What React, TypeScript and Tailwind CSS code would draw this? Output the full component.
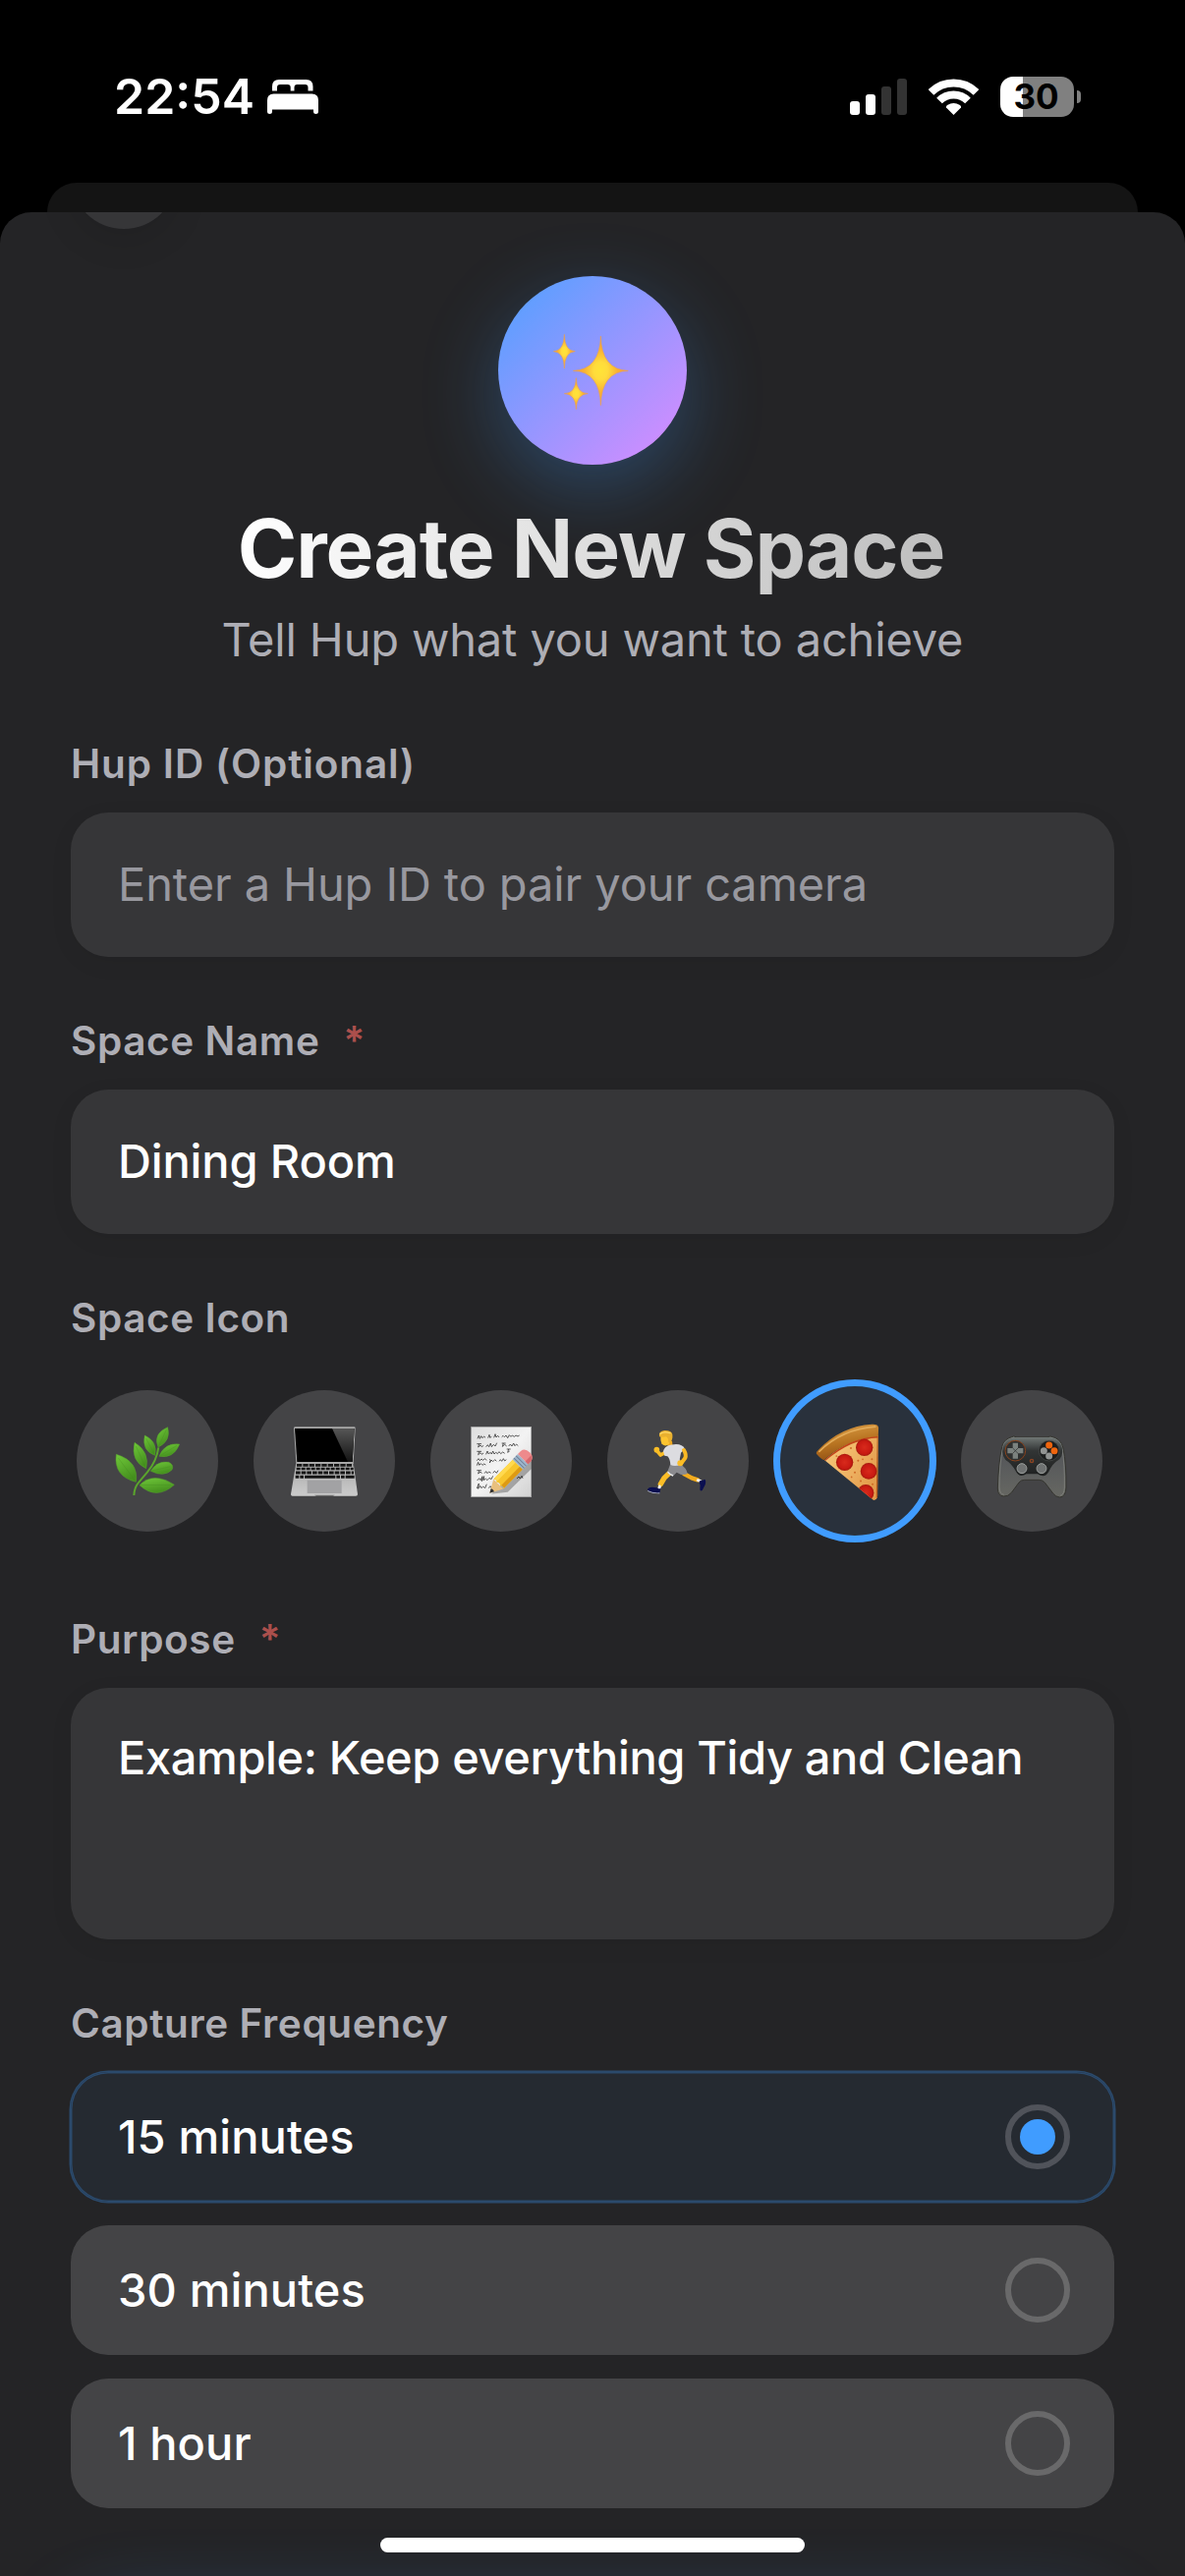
import React from "react";

function Star({ cx, cy, rx, ry }: { cx: number; cy: number; rx: number; ry: number }) {
  const k = 0.03;
  const d = `M${cx} ${cy - ry} Q${cx + rx * k} ${cy - ry * k} ${cx + rx} ${cy} Q${cx + rx * k} ${cy + ry * k} ${cx} ${cy + ry} Q${cx - rx * k} ${cy + ry * k} ${cx - rx} ${cy} Q${cx - rx * k} ${cy - ry * k} ${cx} ${cy - ry}Z`;
  return <path d={d} fill="url(#spark)" stroke="#f2a03a" strokeWidth="1.500" strokeLinejoin="round" />;
}

function Sparkles() {
  return (
    <svg viewBox="201 123 576 576" className="size-full">
      <defs>
        <radialGradient id="spark">
          <stop offset="0" stopColor="#ffe337" />
          <stop offset="0.25" stopColor="#ffdc3c" />
          <stop offset="0.6" stopColor="#f9b233" />
          <stop offset="1" stopColor="#ee9a48" />
        </radialGradient>
      </defs>
      <Star cx={514} cy={412} rx={84} ry={106} />
      <Star cx={403} cy={353} rx={33} ry={52} />
      <Star cx={439} cy={482} rx={36} ry={48} />
    </svg>
  );
}

function Herb() {
  const leaves = [
    ["M303 249 Q286 208 332 188 Q343 230 303 249Z", "M303 249 L328 196"],
    ["M306 277 Q322 235 368 240 Q350 285 306 277Z", "M306 277 L360 244"],
    ["M293 274 Q252 260 262 213 Q302 232 293 274Z", "M293 274 L266 222"],
    ["M266 314 Q218 292 231 235 Q278 264 266 314Z", "M266 314 L235 246"],
    ["M235 355 Q166 338 175 271 Q244 292 235 355Z", "M235 355 L181 282"],
    ["M280 322 Q300 290 335 295 Q352 303 345 318 Q320 342 280 322Z", "M280 322 L340 308"],
    ["M246 365 Q288 322 352 364 Q298 412 246 365Z", "M246 365 L342 364"],
  ];
  return (
    <svg viewBox="54 75 432 432" className="size-full">
      <defs>
        <linearGradient id="leaf" x1="0" y1="0" x2="0.4" y2="1">
          <stop offset="0" stopColor="#70c93a" />
          <stop offset="1" stopColor="#45901e" />
        </linearGradient>
      </defs>
      <path d="M229 396 Q230 372 244 356 L270 325 Q298 292 304 250" fill="none" stroke="#5aa52c" strokeWidth="6" />
      {leaves.map(([leaf, vein]) => (
        <g key={leaf}>
          <path d={leaf} fill="url(#leaf)" stroke="#56a82a" strokeWidth="1.500" />
          <path d={vein} stroke="#3f8420" strokeWidth="2" opacity="0.4" />
        </g>
      ))}
    </svg>
  );
}

function Laptop() {
  return (
    <svg viewBox="594 75 432 432" className="size-full">
      <defs>
        <linearGradient id="glare" x1="0" y1="0" x2="0" y2="1">
          <stop offset="0" stopColor="#565656" />
          <stop offset="1" stopColor="#141414" />
        </linearGradient>
        <linearGradient id="deck" x1="0" y1="0" x2="0" y2="1">
          <stop offset="0" stopColor="#a9a9a9" />
          <stop offset="1" stopColor="#cccccc" />
        </linearGradient>
      </defs>
      <path d="M717 191 Q717 187 722 187 H901 Q905 187 905 191 L899 297 H724Z" fill="#a8a8a8" />
      <path d="M720 192 H902 L896 294 H727Z" fill="#000" />
      <path d="M834 192 H902 L896 294 H882Z" fill="url(#glare)" />
      <path d="M724 297 H899 L912 393 Q912 398 906 398 H713 Q708 398 708 393Z" fill="url(#deck)" />
      <path d="M726 304 H898" stroke="#151515" strokeWidth="8" strokeDasharray="16 3" />
      <path d="M725 315 H899" stroke="#151515" strokeWidth="8" strokeDasharray="12 3" />
      <path d="M723 327 H900" stroke="#151515" strokeWidth="9" strokeDasharray="14 3" />
      <path d="M722 340 H902" stroke="#151515" strokeWidth="9" strokeDasharray="11 3 11 3 94 3" />
      <rect x="758" y="350" width="105" height="40" fill="#a2a2a4" />
      <path d="M780 395 H842 L836 399 H786Z" fill="#6b6b6b" />
    </svg>
  );
}

function Memo() {
  const lines = [
    "M198 223 l4 -10 l3 10 l4 -8 l4 6 l5 -5 l4 4 m8 1 l4 -10 l2 9 l5 -3 m7 3 l4 -11 l3 10 l5 -5 l4 5 m8 -1 l4 -4 l4 4 l5 -5 l5 8 l5 -9 l5 5 l4 -4 l6 4 l5 -4 l6 3 l5 -3",
    "M196 239 h14 m-7 0 l-3 10 l7 -6 l4 5 l5 -4 m8 4 l5 -6 l4 6 l5 -11 l3 11 l6 -7 l5 5 l5 -10 m15 1 h12 m-7 0 l-3 10 l7 -6 l6 5 m6 0 l5 -6 l5 6 l5 -9 l4 8 l5 -5 l5 5",
    "M196 262 h14 m-7 0 l-3 10 l7 -6 l4 5 l5 -4 m8 4 l4 -10 l4 9 l5 -5 l4 5 l4 -9 l4 9 l5 -5 l5 4 l5 -6 l5 6 l6 -5 l6 4 m6 -13 h12 m-6 0 l-3 10 l6 -4",
    "M196 290 l5 -6 l4 6 l5 -5 l5 4 l5 -5 l6 5 m8 -3 l4 3 l-3 8 l5 -9 l5 5 l6 -6 l5 5 m8 0 l4 -5 l4 5 l5 -8 l4 7 l5 -4",
    "M196 305 l4 -10 l3 9 l5 -5 l5 5 l5 -4 l5 3",
    "M196 320 h14 m-7 0 l-3 10 l7 -6 l4 5 m8 0 l5 -6 l4 6 l5 -5 l6 4 m6 0 l5 -6 l6 6 l5 -8",
    "M197 351 l6 -7 l4 6 l6 -12 l-2 15 l7 -15 l-1 12 l6 -5 l5 5 l6 -7 l6 4 l5 -10 M318 345 l6 -6 l4 6 l5 -8 l3 7",
    "M196 375 l6 -15 l-2 16 l6 -9 l4 7 l5 -5 l6 5 l5 -12 m6 12 l5 -6 l5 7 l5 -14",
  ];
  return (
    <svg viewBox="54 75 432 432" className="size-full">
      <defs>
        <linearGradient id="paper" x1="0" y1="0" x2="1" y2="1">
          <stop offset="0" stopColor="#dedede" />
          <stop offset="0.5" stopColor="#f3f3f3" />
          <stop offset="1" stopColor="#d2d2d2" />
        </linearGradient>
      </defs>
      <rect x="179" y="187" width="183" height="214" fill="url(#paper)" stroke="#a9a9a9" strokeWidth="2" />
      {lines.map((d) => (
        <path key={d} d={d} fill="none" stroke="#3a3a3a" strokeWidth="2.500" strokeLinejoin="round" />
      ))}
      <path d="M240 392 L290 386 L362 316 L362 280Z" fill="#000" opacity="0.28" />
      <g transform="translate(235 389) rotate(-45.5)">
        <path d="M0 0 L38 -21 V21Z" fill="#e9c07e" />
        <path d="M0 0 L13 -7 Q16 0 13 7Z" fill="#333" />
        <path d="M38 -21 Q46 -14 38 -8 Q46 0 38 8 Q46 14 38 21 H122 V-21Z" fill="#f7c52d" />
        <rect x="42" y="-21" width="80" height="12" fill="#ffd94f" />
        <rect x="42" y="9" width="80" height="12" fill="#dd9a13" />
        <rect x="122" y="-22" width="23" height="44" fill="#9fb6cc" />
        <path d="M128 -22 V22 M137 -22 V22" stroke="#6e8196" strokeWidth="3" />
        <path d="M145 -22 H158 Q174 -20 174 0 Q174 20 158 22 H145Z" fill="#ee8a8c" />
        <path d="M145 10 H170 Q166 21 158 22 H145Z" fill="#d6686d" />
      </g>
    </svg>
  );
}

function Runner() {
  return (
    <svg viewBox="594 75 432 432" className="size-full">
      <g fill="none" strokeLinecap="round" strokeLinejoin="round">
        <path d="M828 330 L852 343 L870 349" stroke="#f2ab1d" strokeWidth="13" />
        <path d="M871 350 L878 352" stroke="#f4f4f4" strokeWidth="9" />
        <path d="M786 326 L768 343 L757 362" stroke="#fbbd26" strokeWidth="16" />
        <path d="M754 369 L753 373" stroke="#f4f4f4" strokeWidth="9" />
        <path d="M745 259 L757 273 L770 266" stroke="#fbbd26" strokeWidth="11" />
      </g>
      <circle cx="745" cy="257" r="8.500" fill="#fbbd26" />
      <path d="M717 377 Q720 371 731 371 L745 373 Q752 378 757 375 L754 390 Q733 391 718 382Z" fill="#0b0f50" />
      <path d="M717 381 Q733 390 754 388 V391 Q733 392 718 384Z" fill="#b9bdd2" />
      <path d="M877 351 Q886 352 891 347 Q897 350 893 364 L884 381 Q876 385 877 376 Q879 363 875 356Z" fill="#0b0f50" />
      <path d="M786 302 L816 300 Q836 312 839 330 Q828 335 818 332 L806 326 L794 338 Q784 334 777 326Z" fill="#8a8a8e" />
      <path d="M777 326 Q784 334 794 338 L796 334 Q786 330 780 323Z" fill="#e8e8e8" />
      <path d="M776 232 L792 230 L794 246 H779Z" fill="#eda51c" />
      <path d="M765 262 Q767 247 786 242 L804 240 Q824 240 831 254 L819 266 Q813 284 817 303 Q800 309 787 303 Q786 285 778 277 L769 275Z" fill="#dcdce0" />
      <path d="M828 258 Q836 272 832 282 L820 298" fill="none" stroke="#f9b823" strokeWidth="12" strokeLinecap="round" strokeLinejoin="round" />
      <circle cx="817" cy="298" r="9" fill="#fbbd26" />
      <path d="M757 214 Q756 230 760 238 Q765 246 775 244 Q790 238 790 218 L778 210Z" fill="#fdc430" />
      <path d="M753 217 Q750 200 768 198 Q790 197 793 210 Q795 226 785 238 L780 232 Q782 222 774 217 Q762 219 753 217Z" fill="#e9b02f" />
      <path d="M756 208 Q768 200 786 206" fill="none" stroke="#ffd968" strokeWidth="4" strokeLinecap="round" />
    </svg>
  );
}

function Pizza() {
  return (
    <svg viewBox="52 43 496 496" className="size-full">
      <defs>
        <linearGradient id="crust" x1="0.3" y1="0" x2="0.6" y2="1">
          <stop offset="0" stopColor="#d99b45" />
          <stop offset="0.5" stopColor="#b87421" />
          <stop offset="1" stopColor="#8d4c12" />
        </linearGradient>
        <linearGradient id="cheese" x1="0" y1="0" x2="1" y2="0.6">
          <stop offset="0" stopColor="#f5c67a" />
          <stop offset="0.5" stopColor="#f0b768" />
          <stop offset="1" stopColor="#e39a4a" />
        </linearGradient>
        <radialGradient id="pep">
          <stop offset="0" stopColor="#d82a1c" />
          <stop offset="0.75" stopColor="#c81a12" />
          <stop offset="1" stopColor="#a5180d" />
        </radialGradient>
        <clipPath id="slice">
          <path d="M208 289 Q285 216 371 214 L369 398 Q367 412 356 410Z" />
        </clipPath>
      </defs>
      <path d="M208 289 Q285 216 371 214 L369 398 Q367 412 356 410Z" fill="url(#cheese)" />
      <g clipPath="url(#slice)">
        <path d="M206 290 Q285 220 372 217" fill="none" stroke="#c2441a" strokeWidth="7" />
        <path d="M371 214 L368 404" stroke="#b35a1c" strokeWidth="6" />
        <circle cx="333" cy="388" r="25" fill="url(#pep)" />
        <g fill="#cf6a26">
          <circle cx="288" cy="252" r="3" />
          <circle cx="310" cy="290" r="3" />
          <circle cx="352" cy="286" r="3" />
          <circle cx="300" cy="326" r="3" />
          <circle cx="318" cy="352" r="3" />
          <circle cx="290" cy="340" r="2.500" />
          <circle cx="354" cy="362" r="3" />
          <circle cx="244" cy="276" r="2.500" />
          <circle cx="324" cy="286" r="2.500" />
        </g>
      </g>
      <circle cx="329" cy="250" r="26" fill="url(#pep)" />
      <circle cx="269" cy="295" r="26" fill="url(#pep)" />
      <circle cx="342" cy="322" r="25" fill="url(#pep)" />
      <path d="M183 269 Q182 264 190 257 Q258 186 352 180 Q371 179 372 190 L371 216 Q280 220 207 288 Q200 288 183 269Z" fill="url(#crust)" />
      <path d="M192 262 Q262 194 362 187" fill="none" stroke="#e3ab58" strokeWidth="5" strokeLinecap="round" />
    </svg>
  );
}

function Gamepad() {
  return (
    <svg viewBox="624 75 432 432" className="size-full">
      <defs>
        <linearGradient id="pad" x1="0" y1="0" x2="0" y2="1">
          <stop offset="0" stopColor="#7f8582" />
          <stop offset="0.3" stopColor="#55575a" />
          <stop offset="1" stopColor="#666762" />
        </linearGradient>
        <linearGradient id="face" x1="0" y1="0" x2="0" y2="1">
          <stop offset="0" stopColor="#6f7674" />
          <stop offset="0.35" stopColor="#323535" />
          <stop offset="1" stopColor="#1f2121" />
        </linearGradient>
      </defs>
      <path d="M749 248 Q753 224 785 216 L796 219 H885 L897 216 Q930 222 936 252 Q946 300 945 372 Q944 402 925 402 Q913 401 905 390 L880 357 Q873 349 862 349 H818 Q807 349 801 357 L778 388 Q768 400 755 399 Q736 398 736 375 Q738 300 749 248Z" fill="url(#pad)" stroke="#35352f" strokeWidth="3" />
      <path d="M752 252 Q741 300 741 372 Q742 392 755 394 M933 256 Q941 300 940 372 Q939 394 927 397" fill="none" stroke="#8a8b85" strokeWidth="2" />
      <path d="M756 240 Q766 221 790 219 H890 Q917 221 928 240 Q941 266 925 286 Q902 300 892 324 Q880 345 858 331 H824 Q802 345 791 322 Q778 298 760 288 Q743 266 756 240Z" fill="url(#face)" />
      <circle cx="790" cy="260" r="31" fill="#2e3030" stroke="#87421d" strokeWidth="3" />
      <path d="M782 236 H798 V252 H814 V268 H798 V284 H782 V268 H766 V252 H782Z" fill="#7b817e" />
      <path d="M782 252 L798 268 M798 252 L782 268" stroke="#2a2c2c" strokeWidth="2" />
      <circle cx="893" cy="260" r="31" fill="#1c1e1e" stroke="#4b4e4d" strokeWidth="2" />
      <circle cx="893" cy="243" r="10.500" fill="#ef650e" />
      <circle cx="909" cy="260" r="10.500" fill="#ef650e" />
      <circle cx="877" cy="260" r="10.500" fill="#929493" />
      <circle cx="893" cy="276" r="10.500" fill="#929493" />
      <circle cx="840" cy="291" r="7" fill="#8c4421" />
      <circle cx="840" cy="291" r="3" fill="#333" />
      {[810, 870].map((x) => (
        <g key={x}>
          <circle cx={x} cy="314" r="18" fill="#1b1c1c" />
          <circle cx={x} cy="314" r="15" fill="#6f7272" stroke="#9a9e9c" strokeWidth="3" />
        </g>
      ))}
    </svg>
  );
}

function StatusBar() {
  return (
    <header className="flex h-[186px] shrink-0 items-start justify-between pt-[68px] pr-[106px] pl-[116px]">
      <div className="flex h-[60px] items-center">
        <span className="text-[50px] leading-[60px] font-semibold text-white">22:54</span>
        <svg viewBox="272 81 52 35" className="ml-[13px] h-[35px] w-[52px]" fill="#fff">
          <path d="M277 92.500 V88 Q277 81 284 81 H311.500 Q318.500 81 318.500 88 V92.500 H313.500 V89 Q313.500 86 310.500 86 H302.500 Q299.500 86 299.500 89 V92.500 H295.700 V89 Q295.700 86 292.700 86 H285 Q282 86 282 89 V92.500Z" />
          <path d="M272 102 Q272 95.500 278.500 95.500 H317.500 Q324 95.500 324 102 V114 Q324 116 321.500 116 Q319 116 319 114 V111.500 H277 V114 Q277 116 274.500 116 Q272 116 272 114Z" />
        </svg>
      </div>
      <div className="flex h-[60px] items-center">
        <svg viewBox="865 79 58 37" className="h-[37px] w-[58px]">
          <rect x="865" y="102" width="10" height="14" rx="3" fill="#fff" />
          <rect x="881" y="95" width="10" height="21" rx="3" fill="#fff" />
          <rect x="897" y="87" width="10" height="29" rx="3" fill="#333" />
          <rect x="913" y="79" width="10" height="37" rx="3" fill="#333" />
        </svg>
        <svg viewBox="945 79 51 37" className="ml-[22px] h-[37px] w-[51px]">
          <path d="M947.500 93 A32.700 32.700 0 0 1 993.500 93" fill="none" stroke="#fff" strokeWidth="8" />
          <path d="M956 101.500 A20.500 20.500 0 0 1 985 101.500" fill="none" stroke="#fff" strokeWidth="8" />
          <path d="M970.500 116 L963 108.500 Q962.500 107 964 106 Q970.500 102 977 106 Q978.500 107 978 108.500Z" fill="#fff" />
        </svg>
        <div className="ml-[22px] flex h-[41px] w-[75px] items-center justify-center rounded-[13px] bg-[linear-gradient(90deg,#fff_23px,#808080_23px)] pr-0.5">
          <span className="text-[35px] leading-[41px] font-bold text-black">30</span>
        </div>
        <div className="ml-[3px] h-[13px] w-[4px] rounded-r-full bg-[#808080]" />
      </div>
    </header>
  );
}

function Label({ children, required, wide }: { children: string; required?: boolean; wide?: boolean }) {
  return (
    <div
      className={
        "flex h-[51px] items-center text-[40.5px] leading-[51px] font-semibold text-[#aeaeb5] " +
        (wide ? "tracking-[0.85px]" : "tracking-[0.6px]")
      }
    >
      <span>{children}</span>
      {required && <span className="ml-[24px] text-[#ab4f4c]">*</span>}
    </div>
  );
}

const fieldBox = "mt-6 flex rounded-[38px] bg-[#363638] px-12 text-[47px] shadow-[0_6px_24px_rgba(0,0,0,0.06)]";

const icons = [
  { name: "Herb", art: <Herb /> },
  { name: "Laptop", art: <Laptop /> },
  { name: "Memo", art: <Memo /> },
  { name: "Runner", art: <Runner /> },
  { name: "Pizza", art: <Pizza />, selected: true },
  { name: "Gamepad", art: <Gamepad /> },
];

const frequencies = [
  { label: "15 minutes", selected: true },
  { label: "30 minutes", selected: false },
  { label: "1 hour", selected: false },
];

export default function App() {
  return (
    <div className="relative flex h-[2622px] w-[1206px] flex-col overflow-hidden bg-black font-['Inter',sans-serif]">
      <StatusBar />
      <div className="mx-12 h-[30px] shrink-0 rounded-t-[30px] bg-[#141414]" />
      <main className="flex-1 overflow-hidden rounded-t-[32px] bg-[#242426] px-[72px]">
        <div className="mt-[-91px] size-[108px] rounded-full bg-[#363638] shadow-[0_12px_36px_rgba(0,0,0,0.1)]" />
        <div className="mx-auto mt-12 size-[192px] rounded-full bg-[linear-gradient(135deg,#4da1ff,#de8bff)] shadow-[0_24px_80px_rgba(64,156,255,0.3)]">
          <Sparkles />
        </div>
        <h1 className="mt-9 flex h-[100px] items-center justify-center pr-[3px] text-[82px] leading-[100px] font-bold tracking-[-1.1px]">
          <span className="bg-[linear-gradient(100deg,#fff,#bdbdbd)] bg-clip-text text-transparent">Create New Space</span>
        </h1>
        <p className="mt-[13px] flex h-[58px] items-center justify-center text-[47px] leading-[58px] tracking-[-0.16px] text-[#aeaeb5]">
          Tell Hup what you want to achieve
        </p>

        <section className="mt-[72px]">
          <Label wide>Hup ID (Optional)</Label>
          <div className={fieldBox + " h-[147px] items-center tracking-[-0.1px] text-[#98989f]"}>Enter a Hup ID to pair your camera</div>
        </section>

        <section className="mt-[60px]">
          <Label required>Space Name</Label>
          <div className={fieldBox + " h-[147px] items-center font-[450] tracking-[-0.15px] text-white"}>Dining Room</div>
        </section>

        <section className="mt-[60px]">
          <Label>Space Icon</Label>
          <div className="mt-12 flex gap-9 pl-1.5">
            {icons.map((icon) =>
              icon.selected ? (
                <div key={icon.name} className="-m-[11px] size-[166px] rounded-full bg-[#29313c] shadow-[inset_0_0_0_7px_#409cff]">{icon.art}</div>
              ) : (
                <div key={icon.name} className="size-[144px] rounded-full bg-[#444446]">{icon.art}</div>
              )
            )}
          </div>
        </section>

        <section className="mt-[84px]">
          <Label required>Purpose</Label>
          <div className={fieldBox + " h-[256px] items-start pt-[42px] leading-[58px] font-[450] tracking-[-0.38px] text-white"}>
            Example: Keep everything Tidy and Clean
          </div>
        </section>

        <section className="mt-[60px]">
          <Label>Capture Frequency</Label>
          <div className="mt-6 flex flex-col gap-6">
            {frequencies.map((f) => (
              <div
                key={f.label}
                className={
                  "flex h-[132px] items-center justify-between rounded-[38px] pr-[45px] pl-12 text-[47px] font-medium tracking-[0.1px] text-white " +
                  (f.selected ? "bg-[#252a31] shadow-[0_0_0_1.5px_#2b4a6c,inset_0_0_0_1.5px_#2b4a6c]" : "bg-[#444446]")
                }
              >
                <span>{f.label}</span>
                <span className={"flex size-[66px] items-center justify-center rounded-full border-[6px] " + (f.selected ? "border-[#50535a]" : "border-[#69696a]")}>
                  {f.selected && <span className="size-9 rounded-full bg-[#409cff]" />}
                </span>
              </div>
            ))}
          </div>
        </section>

        <div className="mt-[80px] h-[150px] rounded-[48px] bg-[#409cff] shadow-[0_24px_80px_rgba(64,156,255,0.33)]" />
      </main>
      <div className="absolute bottom-6 left-1/2 h-[15px] w-[432px] -translate-x-1/2 rounded-full bg-white" />
    </div>
  );
}
